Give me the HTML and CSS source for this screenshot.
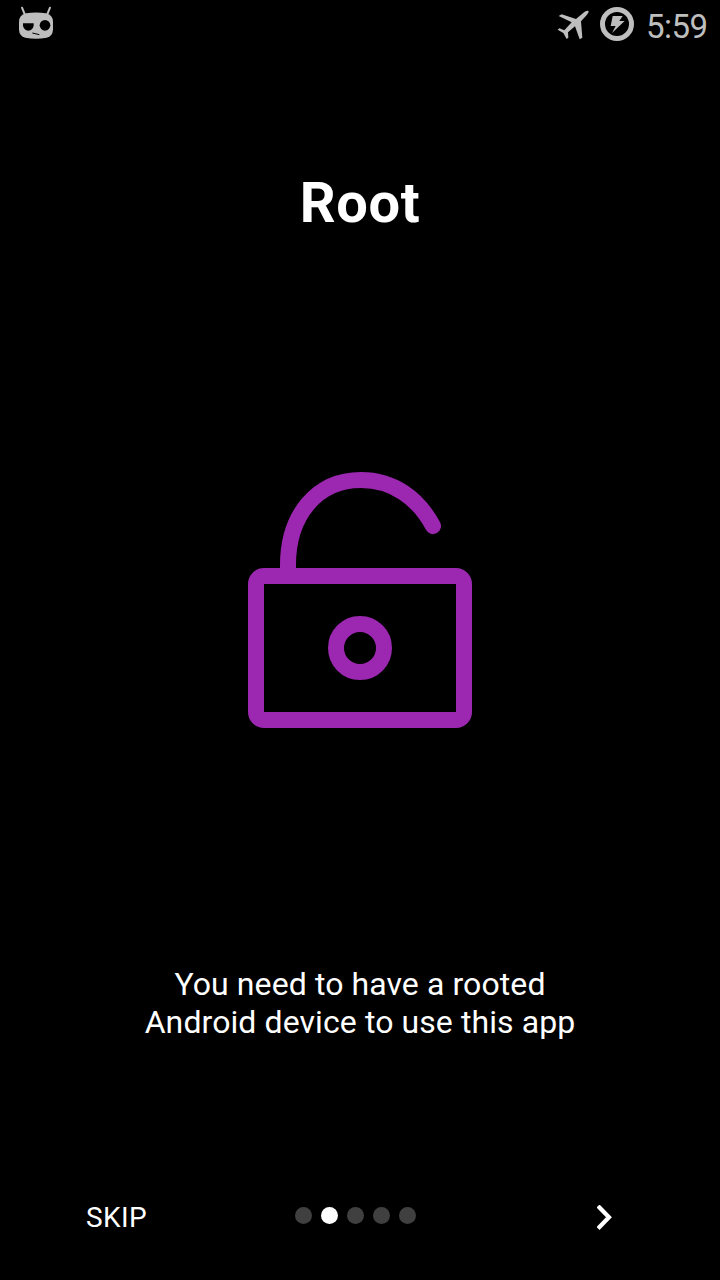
FILE: index.html
```html
<!DOCTYPE html>
<html lang="en">
<head>
<meta charset="utf-8">
<title>Root</title>
<link rel="stylesheet" href="styles.css">
</head>
<body>
<div class="screen">
  <header class="status">
    <svg class="robot" viewBox="54 18 108 102" width="36" height="34">
      <path d="M66 23l9 22M150 23l-9 22" stroke="#bebebe" stroke-width="6" stroke-linecap="round"/>
      <path d="M57 66Q57 45 78 40Q108 35 138 40Q159 45 159 66V89Q158 108 140 113Q108 119 76 113Q58 108 57 89Z" fill="#bebebe"/>
      <path d="M69 70H101V76A16 16 0 0 1 69 76Z"/>
      <circle cx="135" cy="76" r="16"/>
      <path d="M97 99l21 5" stroke="#000" stroke-width="3"/>
    </svg>
    <div class="indicators">
      <svg class="plane" viewBox="36 30 99 90" width="33" height="30">
        <path d="M131 33Q126 31 118 36L93 57L50 43L41 48L80 67L58 91L43 85L38 89L55 99L65 117L70 113L69 97L90 79L104 118L112 113L108 64L126 44Q132 37 131 33Z" fill="#bebebe"/>
      </svg>
      <svg class="battery" viewBox="0 0 102 102" width="34" height="34">
        <circle cx="51" cy="51" r="43.5" fill="none" stroke="#bebebe" stroke-width="15"/>
        <path d="M38 27H68L58 42H74L36 78L47 57H32Z" fill="#bebebe"/>
      </svg>
      <span class="clock">5:59</span>
    </div>
  </header>
  <main class="slide">
    <h1 class="title">Root</h1>
    <svg class="lock" viewBox="0 0 224 256" width="224" height="256" fill="none" stroke="#9c27b0" stroke-width="16">
      <path d="M40 100V93C40 43 69 8 113 8C145 8 170 26 185 54" stroke-linecap="round"/>
      <path d="M16 96H208A16 16 0 0 1 224 112V240A16 16 0 0 1 208 256H16A16 16 0 0 1 0 240V112A16 16 0 0 1 16 96ZM16 112V240H208V112Z" fill="#9c27b0" fill-rule="evenodd" stroke="none"/>
      <circle cx="112" cy="176" r="24"/>
    </svg>
    <p class="description">You need to have a rooted<br>Android device to use this app</p>
  </main>
  <footer class="controls">
    <span class="skip">SKIP</span>
    <div class="dots"><i class="dot"></i><i class="dot active"></i><i class="dot"></i><i class="dot"></i><i class="dot"></i></div>
    <svg class="next" viewBox="0 0 16 26" width="16" height="26">
      <path d="M2.5 2.5L12 12.2L2.5 22" fill="none" stroke="#fff" stroke-width="4.2" stroke-linecap="square"/>
    </svg>
  </footer>
</div>
</body>
</html>
```
FILE: styles.css
```css
body {
  margin: 0;
  background: #000;
  color: #fff;
  font-family: Roboto, sans-serif;
}
.screen {
  display: flex;
  flex-direction: column;
  width: 720px;
  height: 1280px;
  overflow: hidden;
}
.status {
  display: flex;
  justify-content: space-between;
  align-items: flex-start;
  height: 50px;
  padding: 0 12px 0 18px;
  box-sizing: border-box;
}
.robot {
  margin-top: 6px;
}
.indicators {
  display: flex;
  align-items: flex-start;
}
.plane {
  margin-top: 10px;
}
.battery {
  margin: 7px 12px 0 10px;
}
.clock {
  width: 62px;
  margin-top: 8px;
  color: #bebebe;
  font-size: 33px;
  line-height: 38px;
  letter-spacing: -0.5px;
}
.slide {
  display: flex;
  flex-direction: column;
  align-items: center;
  height: 1110px;
}
.title {
  margin: 120px 0 0;
  font-size: 56px;
  line-height: 66px;
  font-weight: 700;
  letter-spacing: 0.6px;
}
.lock {
  margin-top: 236px;
}
.description {
  margin: 237px 0 0;
  font-size: 32px;
  line-height: 38px;
  letter-spacing: 0.09px;
  text-align: center;
  white-space: nowrap;
}
.controls {
  display: flex;
  align-items: flex-start;
  padding: 41px 86px 0;
}
.skip {
  width: 209px;
  margin-top: 1px;
  font-size: 28px;
  line-height: 32px;
  letter-spacing: 0.4px;
}
.dots {
  display: flex;
  gap: 9px;
  margin-top: 6px;
}
.dot {
  width: 17px;
  height: 17px;
  border-radius: 50%;
  background: #404040;
}
.dot.active {
  background: #fff;
}
.next {
  margin: 4px 0 0 181px;
}
```
